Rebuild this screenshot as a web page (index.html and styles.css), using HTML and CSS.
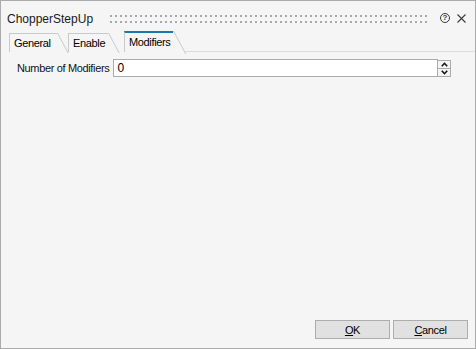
FILE: index.html
```html
<!DOCTYPE html>
<html>

<head>
  <meta charset="utf-8">
  <title>ChopperStepUp</title>
  <link rel="stylesheet" href="styles.css">
</head>

<body>
  <div class="window">
    <div class="titlebar">
      <span class="title">ChopperStepUp</span>
      <div class="grip"></div>
      <span class="help">?</span>
      <svg class="close" width="9" height="9" viewBox="0 0 9 9">
        <path d="M0.5 0.5 L8.5 8.5 M8.5 0.5 L0.5 8.5" stroke="#3c3c3c" stroke-width="1.1" fill="none" />
      </svg>
    </div>

    <div class="tabs">
      <div class="tab tab-general">General</div>
      <div class="tab tab-enable">Enable</div>
      <div class="tab tab-modifiers active">Modifiers</div>
      <div class="tab-fill"></div>
    </div>

    <div class="page">
      <div class="field">
        <label class="field-label">Number of Modifiers</label>
        <div class="spin-box">
          <div class="spin-input">0</div>
          <div class="spin-buttons">
            <div class="spin-btn">
              <svg width="7" height="5" viewBox="0 0 7 5">
                <path d="M0.8 4.2 L3.5 1.3 L6.2 4.2" stroke="#111" stroke-width="1.6" fill="none" />
              </svg>
            </div>
            <div class="spin-btn">
              <svg width="7" height="5" viewBox="0 0 7 5">
                <path d="M0.8 0.8 L3.5 3.7 L6.2 0.8" stroke="#111" stroke-width="1.6" fill="none" />
              </svg>
            </div>
          </div>
        </div>
      </div>
    </div>

    <div class="buttons">
      <button class="btn"><u>O</u>K</button>
      <button class="btn"><u>C</u>ancel</button>
    </div>
  </div>
</body>

</html>
```

FILE: styles.css
```css
* {
  margin: 0;
  padding: 0;
  box-sizing: border-box;
}

body {
  font-family: 'Liberation Sans', Arial, sans-serif;
  background: #f5f5f5;
  color: #000;
}

.window {
  width: 476px;
  height: 349px;
  border: 1px solid #ababab;
  background: #f5f5f5;
  display: flex;
  flex-direction: column;
}

/* タイトルバー */
.titlebar {
  height: 30px;
  padding: 6px 9px 0 6px;
  display: flex;
  align-items: center;
}

.title {
  font-size: 12px;
  color: #1a1a1a;
}

.grip {
  flex: 1;
  margin: 0 11px 1px 17px;
  display: flex;
  flex-direction: column;
  gap: 4px;
}

.grip::before,
.grip::after {
  content: '';
  height: 2px;
  background: repeating-linear-gradient(90deg, #a8a8a8 0 2px, transparent 2px 5px);
}

.help {
  width: 10px;
  height: 10px;
  border: 1px solid #3c3c3c;
  border-radius: 50%;
  font-size: 8px;
  font-weight: bold;
  line-height: 8px;
  text-align: center;
  color: #3c3c3c;
  margin-bottom: 2px;
}

.close {
  margin-left: 7px;
  margin-bottom: 2px;
}

/* タブ */
.tabs {
  height: 21px;
  padding-left: 8px;
  display: flex;
  align-items: flex-end;
  font-size: 11px;
  letter-spacing: -0.35px;
}

.tab {
  position: relative;
  height: 19px;
  padding: 3px 0 0 4px;
  border-left: 1px solid #c9c9c9;
  border-top: 1px solid #c9c9c9;
  margin-right: 11px;
}

.tab::after {
  content: '';
  position: absolute;
  top: -1px;
  left: 100%;
  height: 20px;
  border-left: 1px solid #c9c9c9;
  transform: skewX(28deg);
  transform-origin: top left;
}

.tab-general {
  width: 48px;
}

.tab-enable {
  width: 40px;
  margin-right: 16px;
}

.tab-modifiers {
  width: 49px;
}

.tab.active {
  height: 21px;
  padding-top: 3px;
  border-top: 2px solid #1979ae;
  margin-right: 12px;
}

.tab.active::after {
  top: -2px;
  height: 23px;
}

.tab-fill {
  flex: 1;
  border-bottom: 1px solid #dcdcdc;
}

/* ページ */
.page {
  flex: 1;
  padding: 7px 24px 0 16px;
  font-size: 11px;
  letter-spacing: -0.35px;
}

.field {
  display: flex;
  align-items: center;
  gap: 4px;
}

.field-label {
  color: #111;
}

.spin-box {
  flex: 1;
  display: flex;
  height: 18px;
}

.spin-input {
  flex: 1;
  background: #fff;
  border: 1px solid #ababab;
  padding: 1px 3px 0;
  line-height: 15px;
  font-size: 12px;
}

.spin-buttons {
  width: 13px;
  display: flex;
  flex-direction: column;
  margin-top: 1px;
}

.spin-btn {
  flex: 1;
  border: 1px solid #ababab;
  border-left: none;
  background: #f4f4f4;
  display: flex;
  align-items: center;
  justify-content: center;
}

.spin-btn + .spin-btn {
  border-top: none;
}

/* ボタン */
.buttons {
  display: flex;
  justify-content: flex-end;
  gap: 3px;
  padding: 0 7px 9px 0;
}

.btn {
  width: 75px;
  height: 19px;
  border: 1px solid #adadad;
  background: #e1e1e1;
  font-family: 'Liberation Sans', Arial, sans-serif;
  font-size: 11px;
  letter-spacing: -0.35px;
  color: #000;
}
```
